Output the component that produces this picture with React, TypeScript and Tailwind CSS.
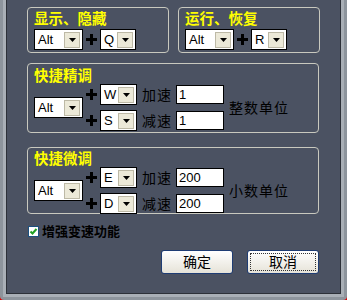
import React from "react";

const cjk = "font-['Liberation_Sans','Noto_Sans_CJK_SC',sans-serif]";

function Plus() {
  return (
    <svg width="11" height="11" viewBox="0 0 11 11" className="shrink-0">
      <rect x="4" y="0" width="3" height="11" fill="#000" />
      <rect x="0" y="4" width="11" height="3" fill="#000" />
    </svg>
  );
}

function Combo({ value, width }: { value: string; width: string }) {
  return (
    <div className={`flex h-[21px] ${width} items-center justify-between border border-black bg-white pl-[3px] pr-[2px]`}>
      <span className="text-[13px] leading-none text-black">{value}</span>
      <span className="flex h-[16px] w-[16px] items-center justify-center border border-[#bdb9a6] bg-[#ece9d8]">
        <svg width="7" height="4" viewBox="0 0 7 4">
          <path d="M0 0h7L3.5 4z" fill="#000" />
        </svg>
      </span>
    </div>
  );
}

function Field({ value }: { value: string }) {
  return (
    <div className="flex h-[19px] w-[48px] items-center border border-black bg-white pl-[2px] text-[13px] leading-none text-black">
      {value}
    </div>
  );
}

function Title({ children }: { children: React.ReactNode }) {
  return <div className="text-[14.5px] font-bold leading-[16px] text-[#ffff00]">{children}</div>;
}

function KeyRow({ keyName, label, value }: { keyName: string; label: string; value: string }) {
  return (
    <div className="flex items-center">
      <Plus />
      <div className="ml-[3px]">
        <Combo value={keyName} width="w-[37px]" />
      </div>
      <span className="ml-[5px] text-[14px] leading-none tracking-[1px] text-black">{label}</span>
      <div className="ml-[4px]">
        <Field value={value} />
      </div>
    </div>
  );
}

function SpeedGroup({ title, rows, unit, className }: {
  title: string;
  rows: { keyName: string; label: string; value: string }[];
  unit: string;
  className: string;
}) {
  return (
    <div className={`w-[292px] rounded-[4px] border border-[#c9c9bf] pl-[6px] ${className}`}>
      <Title>{title}</Title>
      <div className="flex items-center">
        <Combo value="Alt" width="w-[49px]" />
        <div className="ml-[3px] flex flex-col gap-[5px]">
          {rows.map((r) => (
            <KeyRow key={r.keyName} {...r} />
          ))}
        </div>
        <span className="ml-[5px] text-[14px] leading-none tracking-[1px] text-black">{unit}</span>
      </div>
    </div>
  );
}

export default function App() {
  return (
    <div className={`flex h-[300px] w-[347px] flex-col bg-[#e00000] ${cjk}`}>
      <div className="flex flex-1 flex-col rounded-b-[4px] bg-[#8d949c] px-[3px] pb-[3px]">
        <div className="flex flex-1 flex-col border-x-[3px] border-b-[3px] border-[#a9afb6]">
          <div className="flex flex-1 flex-col border-x border-b border-[#2c3038] bg-[#4b5262] pl-[20px] pt-[7px]">
            <div className="flex gap-[9px]">
              <div className="h-[46px] w-[142px] rounded-[4px] border border-[#c9c9bf] pl-[6px] pt-[3px]">
                <Title>显示、隐藏</Title>
                <div className="mt-[2px] flex items-center">
                  <Combo value="Alt" width="w-[49px]" />
                  <div className="ml-[3px]"><Plus /></div>
                  <div className="ml-[3px]"><Combo value="Q" width="w-[36px]" /></div>
                </div>
              </div>
              <div className="h-[46px] w-[142px] rounded-[4px] border border-[#c9c9bf] pl-[6px] pt-[3px]">
                <Title>运行、恢复</Title>
                <div className="mt-[2px] flex items-center">
                  <Combo value="Alt" width="w-[49px]" />
                  <div className="ml-[3px]"><Plus /></div>
                  <div className="ml-[3px]"><Combo value="R" width="w-[36px]" /></div>
                </div>
              </div>
            </div>

            <SpeedGroup
              className="mt-[10px] h-[70px] pt-[4px]"
              title="快捷精调"
              unit="整数单位"
              rows={[
                { keyName: "W", label: "加速", value: "1" },
                { keyName: "S", label: "减速", value: "1" },
              ]}
            />

            <SpeedGroup
              className="mt-[14px] h-[67px] pt-[3px]"
              title="快捷微调"
              unit="小数单位"
              rows={[
                { keyName: "E", label: "加速", value: "200" },
                { keyName: "D", label: "减速", value: "200" },
              ]}
            />

            <div className="mt-[11px] flex items-center pl-[1px]">
              <span className="flex h-[11px] w-[11px] items-center justify-center border border-[#1c5180] bg-white">
                <svg width="9" height="9" viewBox="0 0 9 9">
                  <path d="M1.5 4.5 3.5 6.5 7.5 2" stroke="#21a121" strokeWidth="2" fill="none" />
                </svg>
              </span>
              <span className="ml-[3px] text-[13px] font-bold leading-none text-black">增强变速功能</span>
            </div>

            <div className="mt-[12px] flex gap-[14px] pl-[134px]">
              <button className="flex h-[24px] w-[72px] items-center justify-center rounded-[3px] border border-[#1f3d74] bg-gradient-to-b from-white to-[#e6e3d8] text-[14px] leading-none text-black">
                确定
              </button>
              <button className="flex h-[24px] w-[72px] items-center justify-center rounded-[3px] border border-[#1f3d74] bg-gradient-to-b from-white to-[#e6e3d8] p-[2px] text-[14px] leading-none text-black">
                <span className="flex h-full w-full items-center justify-center border border-dotted border-[#333]">取消</span>
              </button>
            </div>
          </div>
        </div>
      </div>
    </div>
  );
}
